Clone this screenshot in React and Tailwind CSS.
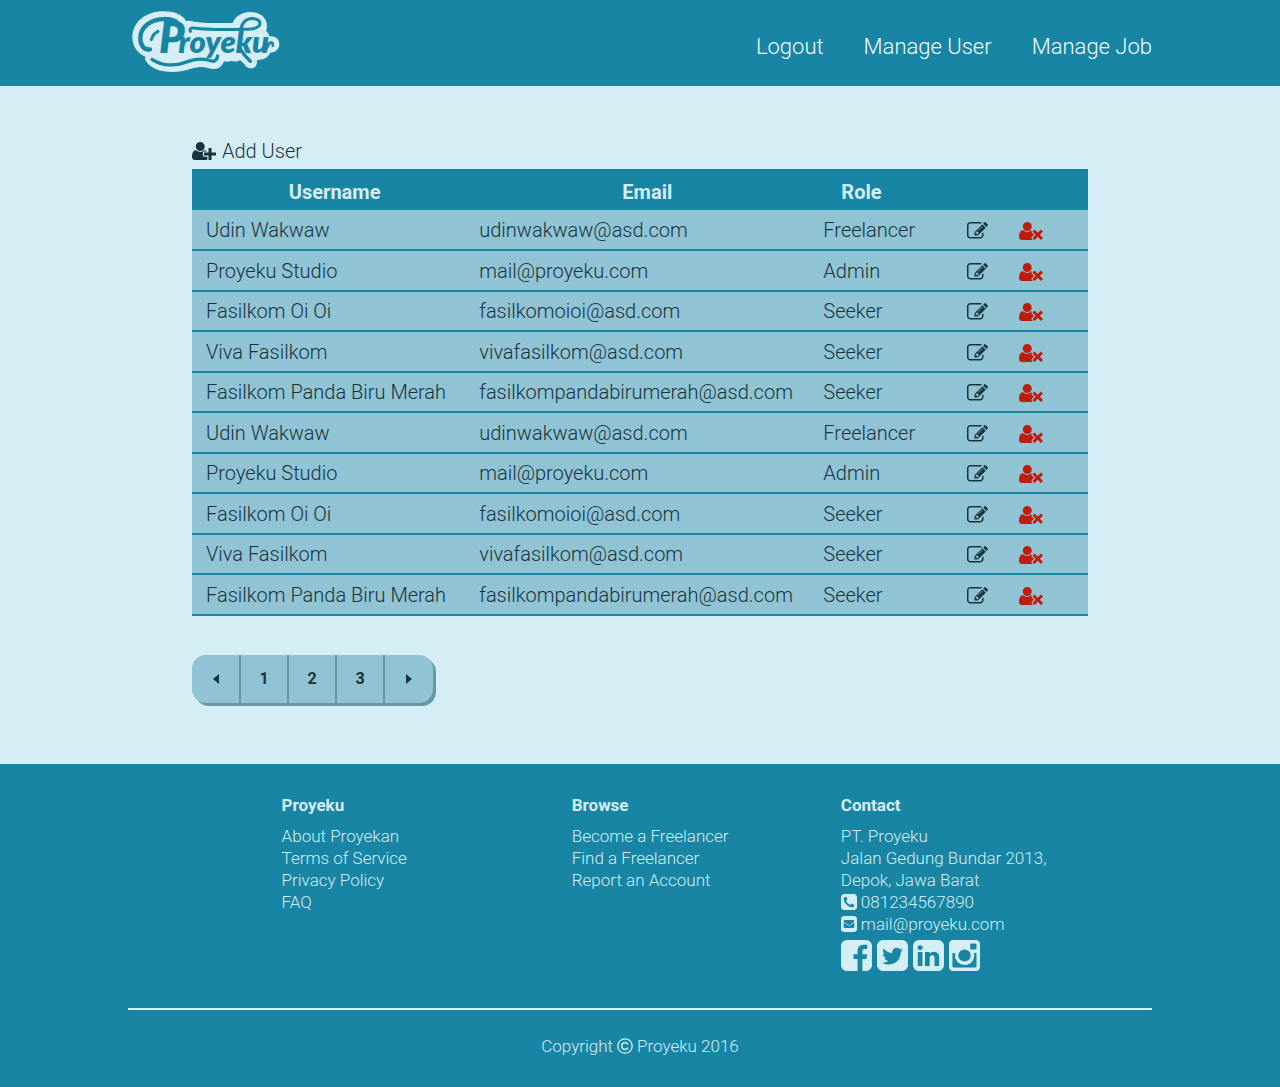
const PATHS = {
  edit: "M888 1184l116-116-152-152-116 116v56h96v96h56zm440-720q-16-16-33 1l-350 350q-17 17-1 33t33-1l350-350q17-17 1-33zm80 594v190q0 119-84.5 203.5t-203.5 84.5h-832q-119 0-203.5-84.5t-84.5-203.5v-832q0-119 84.5-203.5t203.5-84.5h832q63 0 117 25 15 7 18 23 3 17-9 29l-49 49q-14 14-32 8-23-6-45-6h-832q-66 0-113 47t-47 113v832q0 66 47 113t113 47h832q66 0 113-47t47-113v-126q0-13 9-22l64-64q15-15 35-7t20 29zm-96-738l288 288-672 672h-288v-288zm444 132l-92 92-288-288 92-92q28-28 68-28t68 28l152 152q28 28 28 68t-28 68z",
  userPlus: "M704 896q-159 0-271.5-112.5t-112.5-271.5 112.5-271.5 271.5-112.5 271.5 112.5 112.5 271.5-112.5 271.5-271.5 112.5zm960 128h352q13 0 22.5 9.5t9.5 22.5v192q0 13-9.5 22.5t-22.5 9.5h-352v352q0 13-9.5 22.5t-22.5 9.5h-192q-13 0-22.5-9.5t-9.5-22.5v-352h-352q-13 0-22.5-9.5t-9.5-22.5v-192q0-13 9.5-22.5t22.5-9.5h352v-352q0-13 9.5-22.5t22.5-9.5h192q13 0 22.5 9.5t9.5 22.5v352zm-736 224q0 52 38 90t90 38h256v238q-68 50-171 50h-874q-121 0-194-69t-73-190q0-53 3.5-103.5t14-109 26.5-108.5 43-97.5 62-81 85.5-53.5 111.5-20q19 0 39 17 79 61 154.5 91.5t164.5 30.5 164.5-30.5 154.5-91.5q20-17 39-17 132 0 217 96h-223q-52 0-90 38t-38 90v192z",
  userTimes: "M704 896q-159 0-271.5-112.5t-112.5-271.5 112.5-271.5 271.5-112.5 271.5 112.5 112.5 271.5-112.5 271.5-271.5 112.5zm1077 320l249 249q9 9 9 23 0 13-9 22l-136 136q-9 9-22 9-14 0-23-9l-249-249-249 249q-9 9-23 9-13 0-22-9l-136-136q-9-9-9-22 0-14 9-23l249-249-249-249q-9-9-9-23 0-13 9-22l136-136q9-9 22-9 14 0 23 9l249 249 249-249q9-9 23-9 13 0 22 9l136 136q9 9 9 22 0 14-9 23zm-498 0l-181 181q-37 37-37 91 0 53 37 90l83 83q-21 3-44 3h-874q-121 0-194-69t-73-190q0-53 3.5-103.5t14-109 26.5-108.5 43-97.5 62-81 85.5-53.5 111.5-20q19 0 39 17 154 122 319 122t320-122q20-17 39-17 28 0 57 6-28 27-41 50t-13 56q0 54 37 91z",
  phone: "M1408 1193q0-11-2-16t-18-16.5-40.5-25-47.5-26.5-45.5-25-28.5-15q-5-3-19-13t-25-15-21-5q-15 0-36.5 20.5t-39.5 45-38.5 45-33.5 20.5q-7 0-16.5-3.5t-15.5-6.5-17-9.5-14-8.5q-99-55-170-126.5t-127-170.5q-2-3-8.5-14t-9.5-17-6.5-15.5-3.5-16.5q0-13 20.5-33.5t45-38.5 45-39.5 20.5-36.5q0-10-5-21t-15-25-13-19q-3-6-15-28.5t-25-45.5-26.5-47.5-25-40.5-16.5-18-16-2q-48 0-101 22-46 21-80 94.5t-34 130.5q0 16 2.5 34t5 30.5 9 33 10 29.5 12.5 33 11 30q60 164 216.5 320.5t320.5 216.5q6 2 30 11t33 12.5 29.5 10 33 9 30.5 5 34 2.5q57 0 130.5-34t94.5-80q22-53 22-101zm256-777v960q0 119-84.5 203.5t-203.5 84.5h-960q-119 0-203.5-84.5t-84.5-203.5v-960q0-119 84.5-203.5t203.5-84.5h960q119 0 203.5 84.5t84.5 203.5z",
  mail: "M416 128h960q119 0 203.5 84.5t84.5 203.5v960q0 119-84.5 203.5t-203.5 84.5h-960q-119 0-203.5-84.5t-84.5-203.5v-960q0-119 84.5-203.5t203.5-84.5zM384 740v444q0 96 96 96h832q96 0 96-96v-444L1010 1010q-114 80-228 0zM480 512q-96 0-96 96 0 60 70 108l356 246q86 56 172 0l356-246q70-48 70-108 0-96-96-96z",
  facebook: "M1376 128q119 0 203.5 84.5t84.5 203.5v960q0 119-84.5 203.5t-203.5 84.5h-188v-595h199l30-232h-229v-148q0-56 23.5-84t91.5-28l122-1v-207q-63-9-178-9-136 0-217.5 80t-81.5 226v171h-200v232h200v595h-532q-119 0-203.5-84.5t-84.5-203.5v-960q0-119 84.5-203.5t203.5-84.5h960z",
  twitter: "M1408 610q-56 25-121 34 68-40 93-117-65 38-134 51-61-66-153-66-87 0-148.5 61.5t-61.5 148.5q0 29 5 48-129-7-242-65t-192-155q-29 50-29 106 0 114 91 175-47-1-100-26v2q0 75 50 133.5t123 72.5q-29 8-51 8-13 0-39-4 21 63 74.5 104t121.5 42q-116 90-261 90-26 0-50-3 148 94 322 94 112 0 210-35.5t168-95 120.5-137 75-162 24.5-168.5q0-18-1-27 63-45 105-109zm256-194v960q0 119-84.5 203.5t-203.5 84.5h-960q-119 0-203.5-84.5t-84.5-203.5v-960q0-119 84.5-203.5t203.5-84.5h960q119 0 203.5 84.5t84.5 203.5z",
  linkedin: "M365 1414h231v-694h-231v694zm246-908q-1-52-36-86t-93-34-94.5 34-36.5 86q0 51 35.5 85.5t92.5 34.5h1q59 0 95-34.5t36-85.5zm585 908h231v-398q0-154-73-233t-193-79q-136 0-209 117h2v-101h-231q3 66 0 694h231v-388q0-38 7-56 15-35 45-59.5t74-24.5q116 0 116 157v371zm468-998v960q0 119-84.5 203.5t-203.5 84.5h-960q-119 0-203.5-84.5t-84.5-203.5v-960q0-119 84.5-203.5t203.5-84.5h960q119 0 203.5 84.5t84.5 203.5z",
  instagram: "M1490 1426v-648h-135q20 63 20 131 0 126-64 232.5t-174 168.5-240 62q-197 0-337-135.5t-140-327.5q0-68 20-131h-141v648q0 26 17.5 43.5t43.5 17.5h1069q25 0 43-17.5t18-43.5zm-284-533q0-124-90.5-211.5t-218.5-87.5q-127 0-217.5 87.5t-90.5 211.5 90.5 211.5 217.5 87.5q128 0 218.5-87.5t90.5-211.5zm284-360v-165q0-28-20-48.5t-49-20.5h-174q-29 0-49 20.5t-20 48.5v165q0 29 20 49t49 20h174q29 0 49-20t20-49zm174-208v1142q0 81-58 139t-139 58h-1142q-81 0-139-58t-58-139v-1142q0-81 58-139t139-58h1142q81 0 139 58t58 139z",
};

function Icon({ name, viewBox = "128 128 1536 1536", className }) {
  return (
    <svg viewBox={viewBox} className={className} fill="currentColor" fillRule="evenodd" aria-hidden="true">
      <path d={PATHS[name]} />
    </svg>
  );
}

function Logo() {
  return (
    <svg viewBox="36 33 444 186" className="h-[62px] w-[148px] overflow-visible" role="img" aria-label="Proyeku">
      <path
        fill="#d5eef5"
        d="M130 34C164 34 186 43 199 64C207 61 214 63 222 65C260 70 300 69 338 69C346 48 366 36 390 36C420 36 441 54 441 78C441 84 440 88 438 92C445 98 447 104 448 109C466 106 478 118 478 132C478 148 466 158 450 158C447 168 436 178 420 179C412 179 410 181 411 186C411 198 403 205 393 205C382 205 377 198 372 191L360 180C353 186 343 186 335 182C326 186 318 186 312 184C306 198 298 207 282 207C268 207 258 200 240 201C215 203 195 216 158 216C120 216 92 204 80 186C75 180 74 175 76 170C52 160 37 139 37 112C37 66 78 34 130 34Z"
      />
      <g fill="none" stroke="#1785a3" strokeLinecap="round" strokeLinejoin="round">
        <path strokeWidth="13" d="M90 148C73 151 61 137 61 115C61 82 91 57 135 57C155 57 172 63 180 78" />
        <path strokeWidth="9" d="M94 119C97 108 104 99 114 94" />
        <path strokeWidth="10" d="M96 178C125 198 164 199 196 187C224 176 248 173 276 183C284 186 290 180 293 168" />
        <path strokeWidth="9" d="M211 94C208 86 213 83 222 84C275 91 330 88 372 88C402 88 420 83 420 70C420 58 404 55 390 56C374 58 366 68 362 90" />
        <path strokeWidth="10" d="M360 145C369 161 380 174 391 184" />
        <path strokeWidth="8" d="M430 154C444 153 440 130 452 128C458 127 460 132 458 137" />
      </g>
      <text x="117" y="160" fill="#1785a3" fontFamily="Lato, sans-serif" fontStyle="italic" fontWeight="800" fontSize="93">
        <tspan fontSize="128">P</tspan>
        <tspan dx="-18">royeku</tspan>
      </text>
    </svg>
  );
}

const PEOPLE = [
  ["Udin Wakwaw", "udinwakwaw@asd.com", "Freelancer"],
  ["Proyeku Studio", "mail@proyeku.com", "Admin"],
  ["Fasilkom Oi Oi", "fasilkomoioi@asd.com", "Seeker"],
  ["Viva Fasilkom", "vivafasilkom@asd.com", "Seeker"],
  ["Fasilkom Panda Biru Merah", "fasilkompandabirumerah@asd.com", "Seeker"],
];
const ROWS = [...PEOPLE, ...PEOPLE];

function UserTable() {
  return (
    <table className="w-full table-fixed border-collapse text-left text-xl whitespace-nowrap">
      <colgroup>
        <col className="w-[30.5%]" />
        <col className="w-[38.4%]" />
        <col className="w-[16%]" />
        <col className="w-[6%]" />
        <col />
      </colgroup>
      <thead className="bg-[#1785a3] text-[#d5eef5]">
        <tr className="h-[41px]">
          <th scope="col" className="pt-1 pl-3 text-center font-bold">Username</th>
          <th scope="col" className="pt-1 pl-5 text-center font-bold">Email</th>
          <th scope="col" className="pt-1 pl-8 font-bold">Role</th>
          <th colSpan={2} aria-label="Actions" />
        </tr>
      </thead>
      <tbody className="bg-[#90c3d4]">
        {ROWS.map(([name, email, role], i) => (
          <tr key={i} className="h-10 border-b-2 border-[#1785a3] even:h-[41px]">
            <td className="pl-[14px]">{name}</td>
            <td className="pl-[14px]">{email}</td>
            <td className="pl-[14px]">{role}</td>
            <td className="pl-[14px]">
              <button type="button" aria-label={`Edit ${name}`} className="block pt-[2px]">
                <Icon name="edit" viewBox="0 128 1792 1536" className="h-[18px] w-[21px]" />
              </button>
            </td>
            <td className="pl-[13px]">
              <button type="button" aria-label={`Delete ${name}`} className="block pt-[2px] text-[#c01c0c]">
                <Icon name="userTimes" viewBox="0 128 2048 1536" className="h-[18px] w-6" />
              </button>
            </td>
          </tr>
        ))}
      </tbody>
    </table>
  );
}

function Pagination() {
  const cell = "flex h-12 w-12 items-center justify-center border-r-2 border-[#6c96a4] first:w-[49px] last:border-r-0";
  return (
    <nav aria-label="Pagination" className="mt-[39px] flex w-fit overflow-hidden rounded-[14px] bg-[#90c3d4] text-base font-bold shadow-[3px_3px_0_#6b95a3]">
      <button type="button" aria-label="Previous page" className={cell}>
        <svg viewBox="0 0 6 10" className="h-[10px] w-[6px]" fill="currentColor"><path d="M6 0v10L0 5z" /></svg>
      </button>
      {[1, 2, 3].map((n) => (
        <button type="button" key={n} className={cell}>{n}</button>
      ))}
      <button type="button" aria-label="Next page" className={cell}>
        <svg viewBox="0 0 6 10" className="h-[10px] w-[6px]" fill="currentColor"><path d="M0 0v10l6-5z" /></svg>
      </button>
    </nav>
  );
}

function LinkColumn({ title, links }) {
  return (
    <section>
      <h2 className="mb-[9px] font-bold">{title}</h2>
      <ul>
        {links.map((label) => (
          <li key={label}><a href="#">{label}</a></li>
        ))}
      </ul>
    </section>
  );
}

function Footer() {
  return (
    <footer className="bg-[#1785a3] px-[10%] pt-[30px] pb-[30px] text-[17px] leading-[22px] text-[#d5eef5]">
      <div className="grid grid-cols-[290fr_269fr_311fr] pl-[15%]">
        <LinkColumn title="Proyeku" links={["About Proyekan", "Terms of Service", "Privacy Policy", "FAQ"]} />
        <LinkColumn title="Browse" links={["Become a Freelancer", "Find a Freelancer", "Report an Account"]} />
        <section>
          <h2 className="mb-[9px] font-bold">Contact</h2>
          <address className="not-italic">
            <p>PT. Proyeku</p>
            <p>Jalan Gedung Bundar 2013,</p>
            <p>Depok, Jawa Barat</p>
            <p className="flex items-center gap-1"><Icon name="phone" className="size-4" />081234567890</p>
            <p className="flex items-center gap-1"><Icon name="mail" className="size-4" />mail@proyeku.com</p>
          </address>
          <div className="mt-[5px] flex gap-[5px]">
            {["facebook", "twitter", "linkedin", "instagram"].map((name) => (
              <a key={name} href="#" aria-label={name}><Icon name={name} className="size-[31px]" /></a>
            ))}
          </div>
        </section>
      </div>
      <hr className="mt-[37px] border-t-2 border-[#d5eef5]" />
      <p className="mt-[25px] flex items-center justify-center gap-1">
        Copyright
        <svg viewBox="0 0 16 16" className="size-4" fill="none" stroke="currentColor" role="img" aria-label="copyright">
          <circle cx="8" cy="8" r="7.2" strokeWidth="1.3" />
          <path d="M11 6.3A3.4 3.4 0 1 0 11 9.7" strokeWidth="1.5" />
        </svg>
        Proyeku 2016
      </p>
    </footer>
  );
}

export default function App() {
  return (
    <div className="min-h-screen bg-[#d5eef5] font-[Roboto,sans-serif] font-light text-[#17343d]">
      <header className="flex h-[86px] items-start justify-between bg-[#1785a3] px-[10%] pt-[11px]">
        <a href="#" className="ml-1"><Logo /></a>
        <nav className="flex gap-10 pt-5 text-[22px] leading-8 text-[#f2fcff]">
          <a href="#">Logout</a>
          <a href="#">Manage User</a>
          <a href="#">Manage Job</a>
        </nav>
      </header>
      <main className="px-[15%] pt-[51px] pb-[61px]">
        <a href="#" className="mb-1 flex w-fit items-center gap-[6px] text-xl">
          <Icon name="userPlus" viewBox="0 128 2048 1536" className="h-[18px] w-6" />
          Add User
        </a>
        <UserTable />
        <Pagination />
      </main>
      <Footer />
    </div>
  );
}
